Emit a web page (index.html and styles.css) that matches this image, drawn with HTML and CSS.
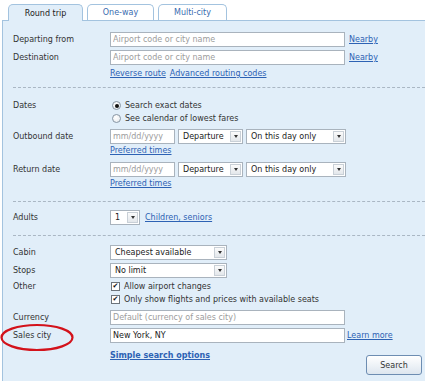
FILE: index.html
```html
<!DOCTYPE html>
<html lang="en">
<head>
  <meta charset="UTF-8" />
  <title>Flight search</title>
  <link rel="stylesheet" href="styles.css">
</head>
<body>
  <div class="tabs">
    <span class="tab tab-round active">Round trip</span>
    <span class="tab tab-oneway">One-way</span>
    <span class="tab tab-multi">Multi-city</span>
  </div>

  <div class="panel">
    <!-- route -->
    <div class="field">
      <span class="label">Departing from</span>
      <div class="ctrl">
        <input class="input wide" type="text" placeholder="Airport code or city name">
        <a href="#">Nearby</a>
      </div>
    </div>
    <div class="field gap">
      <span class="label">Destination</span>
      <div class="ctrl">
        <input class="input wide" type="text" placeholder="Airport code or city name">
        <a href="#">Nearby</a>
      </div>
    </div>
    <div class="field links">
      <span></span>
      <div class="line"><a href="#">Reverse route</a><a href="#">Advanced routing codes</a></div>
    </div>

    <div class="sep"></div>

    <!-- dates -->
    <div class="field lines dates">
      <span class="label">Dates</span>
      <div class="stack">
        <div class="line"><span class="radio checked"></span>Search exact dates</div>
        <div class="line"><span class="radio"></span>See calendar of lowest fares</div>
      </div>
    </div>
    <div class="field outbound">
      <span class="label">Outbound date</span>
      <div class="stack">
        <div class="ctrl">
          <input class="input date" type="text" placeholder="mm/dd/yyyy">
          <span class="select sel-time"><span class="val">Departure</span><span class="btn"></span></span>
          <span class="select sel-day"><span class="val">On this day only</span><span class="btn"></span></span>
        </div>
        <div class="line"><a href="#">Preferred times</a></div>
      </div>
    </div>
    <div class="field return">
      <span class="label">Return date</span>
      <div class="stack">
        <div class="ctrl">
          <input class="input date" type="text" placeholder="mm/dd/yyyy">
          <span class="select sel-time"><span class="val">Departure</span><span class="btn"></span></span>
          <span class="select sel-day"><span class="val">On this day only</span><span class="btn"></span></span>
        </div>
        <div class="line"><a href="#">Preferred times</a></div>
      </div>
    </div>

    <div class="sep sep-dates"></div>

    <!-- passengers -->
    <div class="field adults">
      <span class="label">Adults</span>
      <div class="ctrl">
        <span class="select sel-adults"><span class="val">1</span><span class="btn"></span></span>
        <a href="#">Children, seniors</a>
      </div>
    </div>

    <div class="sep sep-adults"></div>

    <!-- options -->
    <div class="field cabin">
      <span class="label">Cabin</span>
      <div class="ctrl">
        <span class="select sel-cabin"><span class="val">Cheapest available</span><span class="btn"></span></span>
      </div>
    </div>
    <div class="field gap">
      <span class="label">Stops</span>
      <div class="ctrl">
        <span class="select sel-cabin"><span class="val">No limit</span><span class="btn"></span></span>
      </div>
    </div>
    <div class="field lines other">
      <span class="label">Other</span>
      <div class="stack">
        <div class="line"><span class="check">&#10004;</span>Allow airport changes</div>
        <div class="line"><span class="check">&#10004;</span>Only show flights and prices with available seats</div>
      </div>
    </div>
    <div class="field currency">
      <span class="label">Currency</span>
      <div class="ctrl">
        <input class="input wide" type="text" placeholder="Default (currency of sales city)">
      </div>
    </div>
    <div class="field gap">
      <span class="label">Sales city</span>
      <div class="ctrl">
        <input class="input wide" type="text" value="New York, NY">
        <a class="learn" href="#">Learn more</a>
      </div>
    </div>

    <div class="actions">
      <a class="simple" href="#">Simple search options</a>
      <button class="search" type="button">Search</button>
    </div>
  </div>

  <svg class="circle" width="76" height="30" viewBox="0 0 76 30">
    <ellipse cx="37" cy="14.5" rx="35.5" ry="12.5" fill="none" stroke="#d3121b" stroke-width="2.2"/>
  </svg>
</body>
</html>
```

FILE: styles.css
```css
body {
  margin: 0;
  padding-top: 4px;
  font-family: "DejaVu Sans", Verdana, sans-serif;
  font-size: 8px;
  color: #333;
  background: #fff;
  position: relative;
  overflow: hidden;
}

a {
  color: #2d62b4;
  text-decoration: underline;
}

/* tabs */
.tabs {
  display: flex;
  align-items: flex-start;
  gap: 4px;
  padding-left: 8px;
  margin-bottom: -1px;
  position: relative;
  z-index: 1;
}

.tab {
  height: 16px;
  box-sizing: border-box;
  border: 1px solid #a3c3df;
  border-bottom: none;
  border-radius: 5px 5px 0 0;
  background: #fff;
  color: #3a6cb0;
  display: flex;
  align-items: center;
  justify-content: center;
}

.tab.active {
  height: 17px;
  background: #e1eef9;
  color: #222;
}

.tab-round { width: 75px; }
.tab-oneway { width: 67px; }
.tab-multi { width: 69px; }

/* panel */
.panel {
  margin-left: 2px;
  border: 1px solid #a3c3df;
  border-right: none;
  border-bottom: none;
  background: #e1eef9;
  padding: 11px 0 6px 10px;
}

.field {
  display: grid;
  grid-template-columns: 97px 1fr;
}

.field .label {
  line-height: 15px;
}

.field.lines .label {
  line-height: 13px;
}

.gap { margin-top: 3px; }
.links { margin-top: 2px; }
.dates { margin-top: 11px; }
.outbound { margin-top: 4px; }
.return { margin-top: 5px; }
.adults { margin-top: 8px; }
.cabin { margin-top: 9px; }
.other { margin-top: 2px; }
.currency { margin-top: 4px; }

.ctrl {
  display: flex;
  align-items: center;
  gap: 4px;
  height: 15px;
}

.stack {
  display: flex;
  flex-direction: column;
}

.line {
  display: flex;
  align-items: center;
  gap: 4px;
  height: 13px;
}

.sep {
  border-top: 1px dashed #aab7c4;
  margin-top: 7px;
}

.sep-dates { margin-top: 11px; }
.sep-adults { margin-top: 10px; }

/* inputs */
.input {
  height: 15px;
  box-sizing: border-box;
  border: 1px solid #a9b3bd;
  background: #fff;
  padding: 0 2px;
  margin: 0;
  font: inherit;
  color: #222;
  outline: none;
}

.input::placeholder {
  color: #9c9c9c;
}

.wide { width: 235px; }
.date { width: 65px; margin-right: -1px; }

.learn { margin-left: -2px; }

/* fake selects */
.select {
  display: inline-flex;
  height: 15px;
  box-sizing: border-box;
  border: 1px solid #a9b3bd;
  background: #fff;
  color: #222;
}

.select .val {
  flex: 1;
  padding-left: 4px;
  line-height: 13px;
  white-space: nowrap;
}

.select .btn {
  width: 11px;
  margin: 1px;
  box-sizing: border-box;
  border: 1px solid #c9d0d7;
  background: linear-gradient(#fbfbfb, #e3e7eb);
  display: flex;
  align-items: center;
  justify-content: center;
}

.select .btn::after {
  content: '';
  border-left: 2.5px solid transparent;
  border-right: 2.5px solid transparent;
  border-top: 3px solid #333;
}

.sel-time { width: 65px; margin-right: -1px; }
.sel-day { width: 100px; }
.sel-adults { width: 30px; }
.sel-cabin { width: 117px; }

.sel-adults + a { margin-left: 1px; }

/* radios and checkboxes */
.radio {
  width: 9px;
  height: 9px;
  box-sizing: border-box;
  margin-left: 2px;
  border: 1px solid #8795a3;
  border-radius: 50%;
  background: radial-gradient(circle at 40% 35%, #fff, #e4e8ec);
  display: flex;
  align-items: center;
  justify-content: center;
}

.radio.checked::after {
  content: '';
  width: 4px;
  height: 4px;
  border-radius: 50%;
  background: #111;
}

.check {
  width: 9px;
  height: 9px;
  box-sizing: border-box;
  margin-left: 1px;
  border: 1px solid #6c747c;
  background: #fff;
  color: #111;
  font-size: 7px;
  line-height: 7px;
  text-align: center;
}

/* footer */
.actions {
  display: flex;
  justify-content: space-between;
  align-items: flex-start;
  margin: 6px 0 0 97px;
}

.simple {
  font-weight: bold;
  line-height: 13px;
}

.search {
  width: 56px;
  height: 20px;
  margin: 6px 3px 0 0;
  border: 1px solid #6d8db2;
  border-radius: 3px;
  background: linear-gradient(#fff, #dde6ef);
  font: inherit;
  color: #333;
  padding: 0;
}

.circle {
  position: absolute;
  left: 0;
  top: 323px;
}
```
